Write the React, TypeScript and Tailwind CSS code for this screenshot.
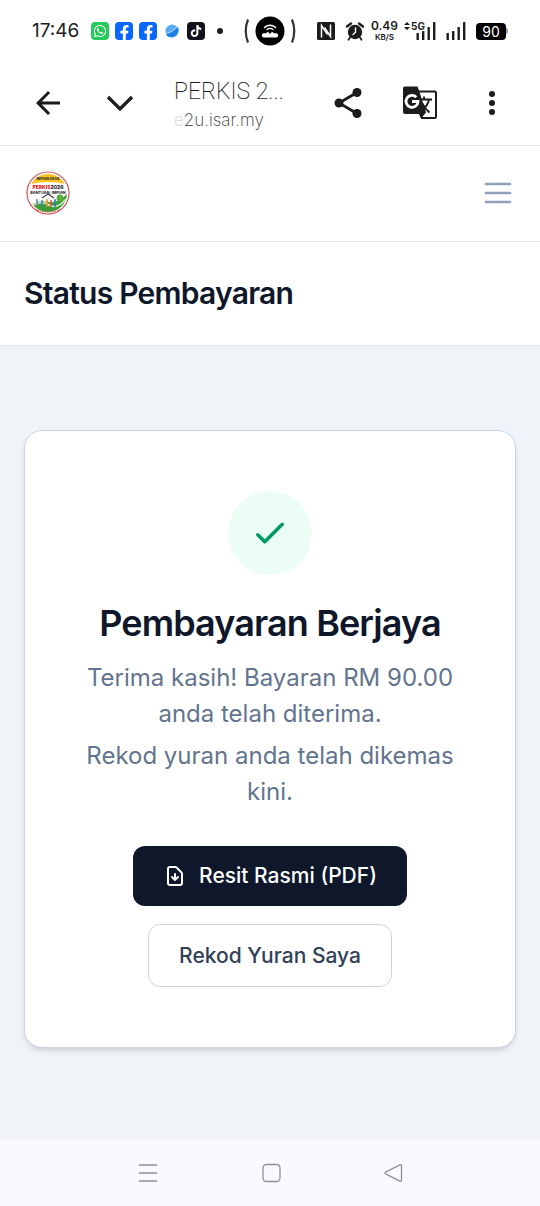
import React from 'react';
import { FaFacebookF, FaTiktok, FaWhatsapp } from 'react-icons/fa';

const NfcIcon = () => (
  <svg viewBox="0 0 18 18" className="h-[18px] w-[18px]" aria-hidden="true">
    <rect width="18" height="18" rx="1.5" fill="#1c1c1c" />
    <path d="M4.500 15.500V3.500L10.500 12.500" fill="none" stroke="#fff" strokeWidth="1.500" />
    <path d="M13.500 2.500V14.500L7.500 5.500" fill="none" stroke="#fff" strokeWidth="1.500" />
  </svg>
);

const AlarmIcon = () => (
  <svg viewBox="0 0 20 20" className="h-5 w-5" aria-hidden="true">
    <circle cx="10" cy="11" r="7.2" fill="#1c1c1c" />
    <path d="M2 5.500 6 2.500M18 5.500 14 2.500" stroke="#1c1c1c" strokeWidth="2.400" strokeLinecap="round" />
    <path d="M5 16.500 3.500 18.800M15 16.500l1.500 2.300" stroke="#1c1c1c" strokeWidth="1.800" strokeLinecap="round" />
    <path d="M10.500 7v4.300L8 13.500" fill="none" stroke="#fff" strokeWidth="1.400" strokeLinecap="round" />
  </svg>
);

const SignalIcon = () => (
  <svg viewBox="0 0 20 18" className="h-[18px] w-5" fill="#1c1c1c" aria-hidden="true">
    <rect x="0.500" y="11" width="2.400" height="7" rx="0.500" />
    <rect x="6" y="9" width="2.400" height="9" rx="0.500" />
    <rect x="11.500" y="5" width="2.400" height="13" rx="0.500" />
    <rect x="17" y="0" width="2.400" height="18" rx="0.500" />
  </svg>
);

const HotspotIcon = () => (
  <svg viewBox="0 0 54 30" className="h-[30px] w-[54px]" fill="none" aria-hidden="true">
    <path d="M5 3.500Q0.500 15 5 26.500M49 3.500q4.500 11.500 0 23" stroke="#333" strokeWidth="2.200" />
    <circle cx="27" cy="15" r="14.500" fill="#000" />
    <path d="M21.500 11.500Q27 7 32.500 11.500" stroke="#fff" strokeWidth="1.500" strokeLinecap="round" />
    <path d="M24 13.500q3-2.200 6 0" stroke="#fff" strokeWidth="1.300" strokeLinecap="round" />
    <path d="M20.500 21.500a2.200 2.200 0 0 1 0-4.300h2.300Q24.500 15.500 27 15.500t4.200 1.700h2.300a2.200 2.200 0 0 1 0 4.300z" fill="#fff" />
    <circle cx="27" cy="16" r="1.500" fill="#000" />
  </svg>
);

const GlobeIcon = () => (
  <svg viewBox="0 0 18 18" className="h-[18px] w-[18px]" aria-hidden="true">
    <circle cx="9" cy="9" r="6.500" fill="#58aaf5" />
    <path d="M3 12Q10 11 15 5 16.500 9 14 12.500 9 17 4 14z" fill="#1f80e4" />
    <path d="M3.500 11.500Q9 10.500 14 4.500" fill="none" stroke="#a9d4fd" strokeWidth="1" />
  </svg>
);

const StatusBar = () => (
  <div className="grid h-[62px] grid-cols-[1fr_auto_1fr] items-center text-[#1c1c1c]">
    <div className="flex items-center pl-8">
      <span className="w-[59px] text-[19px] leading-5">17:46</span>
      <div className="flex gap-1.5">
        <span className="flex h-[18px] w-[18px] items-center justify-center rounded-sm bg-[#25c95c] text-white">
          <FaWhatsapp size={14} />
        </span>
        {[1, 2].map((n) => (
          <span key={n} className="flex h-[18px] w-[18px] items-end justify-center rounded-sm bg-[#0866ff] text-white">
            <FaFacebookF size={15} />
          </span>
        ))}
        <GlobeIcon />
        <span className="flex h-[18px] w-[18px] items-center justify-center rounded-sm bg-[#12121c] text-white">
          <FaTiktok size={12} />
        </span>
      </div>
      <span className="ml-3 h-1.5 w-1.5 rounded-full bg-[#1c1c1c]" />
    </div>
    <HotspotIcon />
    <div className="flex items-center justify-end gap-2.5 pr-8">
      <NfcIcon />
      <AlarmIcon />
      <div className="-ml-1 text-center font-semibold">
        <div className="text-[12px] leading-3">0.49</div>
        <div className="text-[8px] leading-[10px]">KB/S</div>
      </div>
      <div className="relative ml-2">
        <SignalIcon />
        <span className="absolute -top-1 -left-3 flex items-center gap-px text-[10px] leading-4 font-bold">
          <svg viewBox="0 0 6 8" className="h-2 w-1.5" fill="#1c1c1c" aria-hidden="true">
            <path d="M0 3 3 0l3 3zM0 5h6L3 8z" />
          </svg>
          5G
        </span>
      </div>
      <SignalIcon />
      <div className="flex items-center">
        <span className="flex h-[17px] w-[30px] items-center justify-center rounded-sm bg-black text-[14px] text-white">90</span>
        <span className="h-1.5 w-0.5 rounded-r-sm bg-gray-400" />
      </div>
    </div>
  </div>
);

const toolbarButton = 'flex h-[72px] w-[72px] shrink-0 items-center justify-center';

const BrowserBar = () => (
  <div className="flex h-[84px] items-center border-b border-gray-200 px-3 pb-0.5 text-[#1c1c1c]">
    <button className={toolbarButton} aria-label="Back">
      <svg viewBox="0 0 24 24" className="h-9 w-9" fill="currentColor" aria-hidden="true">
        <path d="M20 11H7.830l5.590-5.590L12 4l-8 8 8 8 1.410-1.410L7.830 13H20z" />
      </svg>
    </button>
    <button className={toolbarButton} aria-label="Minimize">
      <svg viewBox="0 0 36 36" className="h-9 w-9" fill="none" stroke="currentColor" strokeWidth="3.300" aria-hidden="true">
        <path d="m6 12 12 12 12-12" />
      </svg>
    </button>
    <div className="min-w-0 flex-1 pt-0.5 pl-[18px]">
      <div className="truncate font-['Roboto'] text-[23px] leading-8 font-extralight">PERKIS 2...</div>
      <div className="text-[17px] leading-6 font-extralight text-[#333]">
        <span className="text-gray-300">e</span>2u.isar.my
      </div>
    </div>
    <button className={toolbarButton} aria-label="Share">
      <svg viewBox="0 0 36 36" className="h-9 w-9" fill="currentColor" aria-hidden="true">
        <path d="M27 7.500 9 18l18 10.500" fill="none" stroke="currentColor" strokeWidth="2.800" />
        <circle cx="27" cy="7.500" r="4.500" />
        <circle cx="9" cy="18" r="4.500" />
        <circle cx="27" cy="28.500" r="4.500" />
      </svg>
    </button>
    <button className={toolbarButton} aria-label="Translate">
      <svg viewBox="0 0 36 36" className="h-9 w-9" fill="none" aria-hidden="true">
        <path d="M16 6.500h16.500a1.500 1.500 0 0 1 1.500 1.500v23.500a1.500 1.500 0 0 1-1.500 1.500H20l-2-5z" fill="#fff" stroke="#1c1c1c" strokeWidth="2" />
        <path d="M3 1.500h12.500l2 5.500 6.500 20.500-5 6-2-4.500H3a2 2 0 0 1-2-2v-23a2 2 0 0 1 2-2.500z" fill="#1c1c1c" />
        <path d="M16 14.500h14M22 11.500v3M27 14.500q-1 6-8 12.500M20 18q3 6 7.500 9.500" stroke="#1c1c1c" strokeWidth="1.900" />
        <path d="M14.300 12.200A6 6 0 1 0 16 16.500h-6" stroke="#fff" strokeWidth="2.800" />
      </svg>
    </button>
    <button className={toolbarButton} aria-label="More">
      <svg viewBox="0 0 36 36" className="h-9 w-9" fill="currentColor" aria-hidden="true">
        <circle cx="18" cy="9" r="3" />
        <circle cx="18" cy="18" r="3" />
        <circle cx="18" cy="27" r="3" />
      </svg>
    </button>
  </div>
);

const Logo = () => (
  <svg viewBox="0 0 48 48" className="h-12 w-12" role="img" aria-label="PERKIS 2026">
    <defs>
      <clipPath id="logo-disc">
        <circle cx="24" cy="24" r="19" />
      </clipPath>
    </defs>
    <circle cx="24" cy="24" r="21" fill="#fff" stroke="#d3535b" strokeWidth="1.200" />
    <g clipPath="url(#logo-disc)">
      <path d="M3 3h42v13Q24 10 3 16z" fill="#fcc21b" />
      <path d="M4 38q9-7 20-5 10 2 20-9v20H4z" fill="#3f9b35" />
      <path d="M7 37q10-6 18-1t17-6" fill="none" stroke="#d8edc7" strokeWidth="1.500" />
      <path d="m18 29 6-4 6 4" fill="none" stroke="#444" strokeWidth="1.200" />
      <circle cx="36" cy="29" r="3.500" fill="#55ad3c" />
    </g>
    <g strokeWidth="1.800" strokeLinecap="round">
      <path d="M13 31v5" stroke="#7391a8" />
      <path d="M18 32v5" stroke="#3a8bb8" />
      <path d="M23 31v6" stroke="#f39b24" />
      <path d="M27 32v5" stroke="#e0574e" />
      <path d="M31 31v6" stroke="#2580b9" />
    </g>
    <g fontFamily="Inter, sans-serif" fontWeight="800" textAnchor="middle">
      <text x="24" y="11" fontSize="3.500" fill="#333">IMPIAN DESA</text>
      <text x="24" y="19.500" fontSize="5" fill="#d71920">PERKIS<tspan fill="#222">2026</tspan></text>
      <text x="24" y="25" fontSize="3.800" fill="#333">BANTUAN, IMPIAN</text>
    </g>
    <path d="M11 40q13 6 26 0" fill="none" stroke="#b9493d" strokeWidth="1" strokeDasharray="1.500 1" />
  </svg>
);

const SiteHeader = () => (
  <header className="flex h-24 items-center justify-between border-b border-slate-200 px-6 pb-0.5">
    <a href="#" aria-label="Home">
      <Logo />
    </a>
    <button className="text-slate-400" aria-label="Menu">
      <svg viewBox="0 0 24 24" className="h-9 w-9" fill="none" stroke="currentColor" strokeWidth="1.800" strokeLinecap="round" aria-hidden="true">
        <path d="M4 6h16M4 12h16M4 18h16" />
      </svg>
    </button>
  </header>
);

const PaymentCard = () => (
  <section className="flex flex-col items-center rounded-[18px] border border-slate-300 bg-white px-12 py-[60px] text-center shadow-md">
    <div className="flex h-[84px] w-[84px] items-center justify-center rounded-full bg-emerald-50 text-emerald-600">
      <svg viewBox="0 0 24 24" className="h-[42px] w-[42px]" fill="none" stroke="currentColor" strokeWidth="2" strokeLinecap="round" strokeLinejoin="round" aria-hidden="true">
        <path d="m5 13 4 4L19 7" />
      </svg>
    </div>
    <h2 className="mt-6 text-[36px] leading-12 font-semibold tracking-tight text-slate-900">Pembayaran Berjaya</h2>
    <p className="mt-[13px] text-[24px] leading-9 text-slate-500">Terima kasih! Bayaran RM 90.00 anda telah diterima.</p>
    <p className="mt-1.5 text-[24px] leading-9 text-slate-500">Rekod yuran anda telah dikemas kini.</p>
    <button className="mt-9 flex h-[60px] items-center gap-3 rounded-xl bg-slate-900 px-[30px] text-[21px] font-medium text-white">
      <svg viewBox="0 0 24 24" className="h-6 w-6" fill="none" stroke="currentColor" strokeWidth="2" strokeLinecap="round" strokeLinejoin="round" aria-hidden="true">
        <path d="M12 10v6m0 0-3-3m3 3 3-3m2 8H7a2 2 0 0 1-2-2V5a2 2 0 0 1 2-2h5.600a1 1 0 0 1 .700.300l5.400 5.400a1 1 0 0 1 .300.700V19a2 2 0 0 1-2 2z" />
      </svg>
      Resit Rasmi (PDF)
    </button>
    <a href="#" className="mt-[18px] flex h-[63px] items-center rounded-xl border border-slate-300 px-[30px] text-[21px] font-medium text-slate-700">
      Rekod Yuran Saya
    </a>
  </section>
);

const SystemNav = () => (
  <nav className="flex h-[66px] items-center justify-center gap-[99px] bg-[#f9f9ff] pl-0.5 text-[#8f8f96]">
    <button aria-label="Recent apps">
      <svg viewBox="0 0 24 24" className="h-6 w-6" fill="none" stroke="currentColor" strokeWidth="1.300" aria-hidden="true">
        <path d="M3 4h18M3 12h18M3 20h18" />
      </svg>
    </button>
    <button aria-label="Home screen">
      <svg viewBox="0 0 24 24" className="h-6 w-6" fill="none" stroke="currentColor" strokeWidth="1.300" aria-hidden="true">
        <rect x="4" y="3.500" width="17" height="17" rx="3.500" />
      </svg>
    </button>
    <button aria-label="Go back">
      <svg viewBox="0 0 24 24" className="h-6 w-6" fill="none" stroke="currentColor" strokeWidth="1.300" strokeLinejoin="round" aria-hidden="true">
        <path d="M3.500 11.200 18 3.800q1.500-.500 1.500 1v14.400q0 1.500-1.500 1L3.500 12.800q-1.200-.800 0-1.600z" />
      </svg>
    </button>
  </nav>
);

export default function App() {
  return (
    <div className="flex min-h-screen flex-col bg-white font-['Inter',sans-serif]">
      <StatusBar />
      <BrowserBar />
      <SiteHeader />
      <div className="border-b border-slate-200 px-6 py-[33px]">
        <h1 className="text-[30px] leading-[37px] font-semibold tracking-tight text-slate-900">Status Pembayaran</h1>
      </div>
      <main className="flex-1 bg-[#f0f4f9] px-6 pt-[84px] pb-12">
        <PaymentCard />
      </main>
      <SystemNav />
    </div>
  );
}
